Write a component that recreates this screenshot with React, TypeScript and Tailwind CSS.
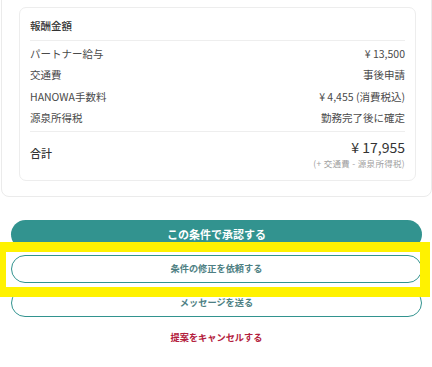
import React from 'react';

const rows = [
    { label: 'パートナー給与', value: '¥ 13,500' },
    { label: '交通費', value: '事後申請' },
    { label: 'HANOWA手数料', value: '¥ 4,455 (消費税込)' },
    { label: '源泉所得税', value: '勤務完了後に確定' },
];

export default function App() {
    return (
        <div
            className="relative w-[432px] h-[367px] overflow-hidden bg-white text-[#333]"
            style={{ fontFamily: '"Noto Sans CJK JP", "Noto Sans", sans-serif' }}
        >
            {/* outer card, top is scrolled off */}
            <div className="ml-[1px] w-[431px] -mt-[20px] pt-[26px] pl-[17px] pr-[15px] pb-[15px] border border-[#ebebeb] rounded-[8px]">
                <div className="border border-[#ededed] rounded-[7px] px-[10px] pt-[10px] pb-[11px]">
                    <div className="h-[16px] leading-[16px] text-[10.5px] font-medium text-[#333]">報酬金額</div>
                    <div className="mt-[6px] border-t border-[#eeeeee]" />
                    <div className="pt-[2px]">
                        {rows.map((r) => (
                            <div key={r.label} className="h-[21.5px] flex items-center justify-between text-[10.5px] text-[#4a4a4a]">
                                <span>{r.label}</span>
                                <span>{r.value}</span>
                            </div>
                        ))}
                    </div>
                    <div className="mt-[2px] border-t border-[#eeeeee]" />
                    <div className="pt-[5px] flex items-center justify-between">
                        <span className="text-[11px] font-medium text-[#333] mt-[1px]">合計</span>
                        <div className="flex flex-col items-end">
                            <span className="h-[20px] leading-[20px] text-[14px] text-[#333]">¥ 17,955</span>
                            <span className="h-[12px] leading-[12px] text-[8.5px] tracking-[0.3px] text-[#a0a0a0]">
                                (+ 交通費 - 源泉所得税)
                            </span>
                        </div>
                    </div>
                </div>
            </div>

            {/* actions */}
            <div className="mt-[23px] ml-[11px] w-[411px] flex flex-col gap-[6px]">
                <button className="h-[29px] rounded-full bg-[#32938f] text-white text-[11px] font-bold">
                    この条件で承認する
                </button>
                <button className="h-[28px] rounded-full border border-[#32938f] bg-white text-[#4e7f83] text-[9.2px] font-bold">
                    条件の修正を依頼する
                </button>
                <button className="h-[28px] rounded-full border border-[#32938f] bg-white text-[#4e7f83] text-[9.2px] font-bold">
                    メッセージを送る
                </button>
                <div className="mt-[7px] h-[14px] leading-[14px] text-center text-[9.2px] font-bold text-[#b3203c]">
                    提案をキャンセルする
                </div>
            </div>

            {/* highlight */}
            <div className="absolute left-[-4px] top-[242px] w-[434px] h-[55px] border-[10px] border-[#fff200] pointer-events-none" />
        </div>
    );
}
